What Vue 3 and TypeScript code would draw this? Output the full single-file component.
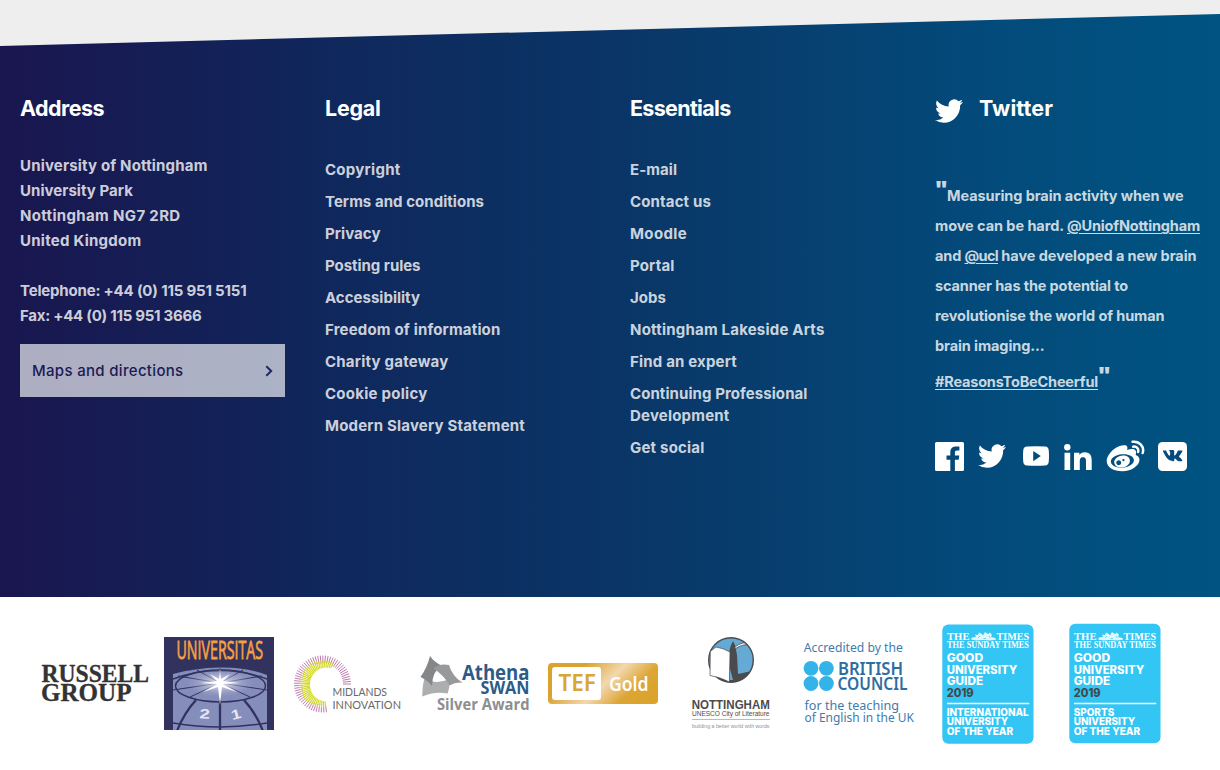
<script setup lang="ts">
interface Line {
  text: string
  width: number
}

/* Tracks a run of text out (or in) so that it spans the given width. */
const vFit = {
  mounted(el: HTMLElement, binding: { value: number }) {
    const count = (el.textContent || '').length
    const natural = el.getBoundingClientRect().width
    if (count > 0) el.style.letterSpacing = `${(binding.value - natural) / count}px`
  },
}

const address: Line[] = [
  { text: 'University of Nottingham', width: 187.5 },
  { text: 'University Park', width: 113 },
  { text: 'Nottingham NG7 2RD', width: 160.5 },
  { text: 'United Kingdom', width: 121.5 },
]
const phones: Line[] = [
  { text: 'Telephone: +44 (0) 115 951 5151', width: 226.5 },
  { text: 'Fax: +44 (0) 115 951 3666', width: 181.5 },
]

const linkColumns: { title: Line; items: Line[][] }[] = [
  {
    title: { text: 'Legal', width: 55.5 },
    items: [
      [{ text: 'Copyright', width: 75.5 }],
      [{ text: 'Terms and conditions', width: 159 }],
      [{ text: 'Privacy', width: 55.5 }],
      [{ text: 'Posting rules', width: 95.5 }],
      [{ text: 'Accessibility', width: 95 }],
      [{ text: 'Freedom of information', width: 175.5 }],
      [{ text: 'Charity gateway', width: 123.5 }],
      [{ text: 'Cookie policy', width: 102.5 }],
      [{ text: 'Modern Slavery Statement', width: 200 }],
    ],
  },
  {
    title: { text: 'Essentials', width: 100.5 },
    items: [
      [{ text: 'E-mail', width: 47 }],
      [{ text: 'Contact us', width: 81 }],
      [{ text: 'Moodle', width: 57 }],
      [{ text: 'Portal', width: 44.5 }],
      [{ text: 'Jobs', width: 36 }],
      [{ text: 'Nottingham Lakeside Arts', width: 194.5 }],
      [{ text: 'Find an expert', width: 107 }],
      [
        { text: 'Continuing Professional', width: 177.5 },
        { text: 'Development', width: 99.5 },
      ],
      [{ text: 'Get social', width: 74.5 }],
    ],
  },
]

const bird =
  'M23.953 4.57a10 10 0 01-2.825.775 4.958 4.958 0 002.163-2.723c-.951.555-2.005.959-3.127 1.184a4.92 4.92 0 00-8.384 4.482C7.69 8.095 4.067 6.13 1.64 3.162a4.822 4.822 0 00-.666 2.475c0 1.71.87 3.213 2.188 4.096a4.904 4.904 0 01-2.228-.616v.06a4.923 4.923 0 003.946 4.827 4.996 4.996 0 01-2.212.085 4.936 4.936 0 004.604 3.417 9.867 9.867 0 01-6.102 2.105c-.39 0-.779-.023-1.17-.067a13.995 13.995 0 007.557 2.209c9.053 0 13.998-7.496 13.998-13.985 0-.21 0-.42-.015-.63A9.935 9.935 0 0024 4.59z'

/* Rays of the sunburst run from due east, over the top, round to the bottom. */
const rays = Array.from({ length: 54 }, (_, i) => {
  const deg = (i / 53) * 278
  const a = (deg * Math.PI) / 180
  const at = (r: number) => `${(37.5 + r * Math.cos(a)).toFixed(2)} ${(67 - r * Math.sin(a)).toFixed(2)}`
  const west = Math.max(0, (1 - Math.cos(a + 0.12)) / 2)
  const mid = 22.5
  return {
    outer: `M${at(28.5)}L${at(mid - 2)}`,
    inner: `M${at(mid + 1)}L${at(mid - 2 - 8 * west)}`,
    yellow: deg > 60,
  }
})

const awards = [
  { first: 'INTERNATIONAL', width: 82 },
  { first: 'SPORTS', width: 40.5 },
]
</script>

<template>
  <div class="page">
    <footer class="footer">
      <section class="column">
        <h2><span v-fit="84" class="run">Address</span></h2>
        <address>
          <div v-for="l in address" :key="l.text"><span v-fit="l.width" class="run">{{ l.text }}</span></div>
          <div class="phones">
            <div v-for="l in phones" :key="l.text"><span v-fit="l.width" class="run">{{ l.text }}</span></div>
          </div>
        </address>
        <a class="maps">
          <span v-fit="151.5" class="run">Maps and directions</span>
          <svg width="8" height="12" viewBox="0 0 8 12"><path d="M1.3 1.2 6.2 6l-4.9 4.8" fill="none" stroke="#1c2763" stroke-width="2" /></svg>
        </a>
      </section>

      <section v-for="c in linkColumns" :key="c.title.text" class="column">
        <h2><span v-fit="c.title.width" class="run">{{ c.title.text }}</span></h2>
        <ul>
          <li v-for="item in c.items" :key="item[0].text">
            <div v-for="l in item" :key="l.text"><span v-fit="l.width" class="run">{{ l.text }}</span></div>
          </li>
        </ul>
      </section>

      <section class="column">
        <h2 class="with-icon">
          <svg width="28" height="24" viewBox="0 2 24 20" preserveAspectRatio="none"><path :d="bird" fill="#fff" /></svg>
          <span v-fit="74" class="run">Twitter</span>
        </h2>
        <div class="tweet">
          <div><span class="quote">"</span><span v-fit="236.5" class="run">Measuring brain activity when we</span></div>
          <div><span v-fit="132" class="run">{{ 'move can be hard. ' }}</span><a v-fit="133" class="run">@UniofNottingham</a></div>
          <div><span v-fit="29.5" class="run">{{ 'and ' }}</span><a v-fit="33.5" class="run">@ucl</a><span v-fit="198.5" class="run">{{ ' have developed a new brain' }}</span></div>
          <div><span v-fit="193" class="run">scanner has the potential to</span></div>
          <div><span v-fit="229.5" class="run">revolutionise the world of human</span></div>
          <div><span v-fit="109.5" class="run">brain imaging...</span></div>
          <div class="last"><a v-fit="163" class="run">#ReasonsToBeCheerful</a><span class="quote">"</span></div>
        </div>
        <div class="social">
          <svg class="facebook" width="29" height="29" viewBox="0 0 29 29">
            <path fill="#fff" d="M1.5 0h26A1.5 1.5 0 0 1 29 1.500v26a1.500 1.500 0 0 1-1.500 1.500h-7.600V17.800h3.800l.6-4.400h-4.400v-2.800c0-1.300.4-2.100 2.200-2.100h2.300V4.600c-.4 0-1.800-.2-3.400-.2-3.400 0-5.700 2.100-5.700 5.800v3.200h-3.800v4.400h3.800V29H1.500A1.500 1.500 0 0 1 0 27.500v-26A1.500 1.500 0 0 1 1.500 0z" />
          </svg>
          <svg class="twitter" width="28" height="24" viewBox="0 2 24 20" preserveAspectRatio="none"><path :d="bird" fill="#fff" /></svg>
          <svg class="youtube" width="26" height="20" viewBox="0 0 26 20">
            <path fill="#fff" fill-rule="evenodd" d="M4 .6Q13-.3 22 .6q3.400.3 3.700 3.500.6 5.900 0 11.800-.3 3.200-3.700 3.500-9 .9-18 0-3.400-.3-3.700-3.500-.6-5.900 0-11.800Q.6.900 4 .6zM10.200 4.900v10.300l7.600-5.150z" />
          </svg>
          <svg class="linkedin" width="28" height="26" viewBox="0 0 28 26">
            <g fill="#fff"><circle cx="3.300" cy="3.200" r="3.200" /><path d="M.5 8.700h5.700V26H.5zM10 8.700h5.400V11c.8-1.500 2.700-2.800 5.400-2.800 5.700 0 6.900 3.600 6.900 8.500V26H22v-8.300c0-2 0-4.500-2.900-4.500s-3.300 2.100-3.300 4.400V26H10z" /></g>
          </svg>
          <svg class="weibo" width="39" height="32" viewBox="0 0 39 32">
            <path fill="#fff" fill-rule="evenodd" d="M18.500 5.200c2.700 0 3.500 2 2.600 4.900 3.500-1.500 7-1.600 8.400.3.900 1.200.7 2.900.1 4.600 2.400.8 3.900 2.400 3.900 4.700 0 5.500-7.600 11.600-17.200 11.600C7.500 31.300.7 27.400.7 21c0-4 3-8.300 7.100-11.700C11.500 6.300 15.500 5 18.500 5.200zM15.700 14.300c-6.400.5-11.200 4-10.800 7.700.4 3.800 5.800 6.200 12.200 5.700 6.400-.6 11.200-4.200 10.800-7.900-.4-3.700-5.800-6.100-12.200-5.500z" />
            <path fill="#fff" fill-rule="evenodd" d="M15.400 15.700c4.400-.8 8.300 1.200 8.500 4.700.2 3.300-3.100 6.600-7.400 7.100-4.300.5-8-1.500-8.300-4.900-.2-3.300 3-6.200 7.200-6.900zM13 20.200a2.500 2.500 0 1 0 .4 4.900 2.500 2.500 0 0 0-.4-4.900zm4.400-1.200a1.100 1.100 0 1 0 .1 2.200 1.100 1.100 0 0 0-.1-2.200z" />
            <path fill="none" stroke="#fff" stroke-width="2.500" stroke-linecap="round" d="M26.600 1.800C33.200.8 38.700 6.600 36.700 13M27.200 6.700c3.300-.6 5.800 2.100 4.900 5.200" />
          </svg>
          <svg class="vk" width="29" height="29" viewBox="0 0 29 29">
            <rect width="29" height="29" rx="4.500" fill="#fff" />
            <path transform="translate(1.600 1.300) scale(.89)" fill="#034b7d" d="M14.300 20.200h1.300s.4 0 .6-.3c.2-.2.200-.6.200-.6s0-1.800.8-2.100c.8-.3 1.900 1.800 3 2.500.8.6 1.500.5 1.500.5l2.900 0s1.500-.1.800-1.300c-.1-.1-.4-.9-2.200-2.600-1.900-1.700-1.600-1.400.6-4.400 1.400-1.800 1.900-2.900 1.800-3.400-.2-.4-1.200-.3-1.200-.3h-3.300s-.3 0-.5.100-.3.400-.3.400-.5 1.400-1.200 2.600c-1.500 2.500-2.100 2.600-2.300 2.500-.6-.4-.4-1.500-.4-2.300 0-2.500.4-3.500-.7-3.800-.4-.1-.7-.1-1.700-.1-1.300 0-2.400 0-3 .3-.4.200-.7.600-.5.700.2 0 .8.100 1 .5.400.5.400 1.500.4 1.500s.2 3-.5 3.300c-.5.300-1.200-.3-2.600-2.700-.7-1.200-1.300-2.600-1.300-2.600s-.1-.3-.3-.4l-.6-.2H4.400s-.5 0-.6.200c-.2.200 0 .6 0 .6s2.500 5.600 5.200 8.500c2.500 2.600 5.300 2.400 5.300 2.400z" />
          </svg>
        </div>
      </section>
    </footer>

    <div class="logos">
      <svg viewBox="31 617 127 140">
        <g class="serif" font-weight="700" font-size="24.500" fill="#333" stroke="#333" stroke-width=".3">
          <text x="41.500" y="681.700" textLength="107.500" lengthAdjust="spacingAndGlyphs">RUSSELL</text>
          <text x="41" y="701.300" textLength="90.500" lengthAdjust="spacingAndGlyphs">GROUP</text>
        </g>
      </svg>

      <svg viewBox="158 617 127 140">
        <defs>
          <clipPath id="globe"><path d="M173 674Q195 668 220 667.500T267 675V730H173z" /></clipPath>
          <radialGradient id="flare"><stop offset="0" stop-color="#fff" /><stop offset=".3" stop-color="#e9ebf6" stop-opacity=".75" /><stop offset="1" stop-color="#aab0d4" stop-opacity="0" /></radialGradient>
        </defs>
        <rect x="164" y="637" width="110" height="93" fill="#32325f" />
        <g clip-path="url(#globe)">
          <rect x="173" y="660" width="94" height="70" fill="#858dba" />
          <g fill="none" stroke="#32325f" stroke-width="1.500">
            <ellipse cx="220.500" cy="686" rx="45" ry="16" />
            <path d="M173 679Q220 662 267 679M168 722Q220 732 272 722" />
            <path d="M220 668V702M197 670 220 683 243 670M178 676 220 683 262 676M173 690 220 683 267 690M190 697 220 683 250 697" stroke-width="1" />
            <path d="M196 700Q184 713 177 731M244 700Q256 713 263 731M220 700V730" stroke-width="2.300" />
          </g>
          <ellipse cx="220" cy="683" rx="34" ry="14" fill="url(#flare)" opacity=".8" />
          <path fill="#fff" d="M220 668l1 11 9-5-7 7 16 2-16 1 14 8-15-5-2 18-2-18-15 5 14-8-16-1 16-2-7-7 9 5z" />
        </g>
        <text class="open" x="176.500" y="658.700" font-size="25.500" fill="#f5a142" stroke="#f5a142" stroke-width=".8" textLength="86.500" lengthAdjust="spacingAndGlyphs">UNIVERSITAS</text>
        <g class="sans" font-size="13.500" font-weight="700" fill="#e6e7f3">
          <text x="199.500" y="718.500" textLength="10.500" lengthAdjust="spacingAndGlyphs" transform="rotate(3 204 713)">2</text>
          <text x="231" y="719" textLength="10" lengthAdjust="spacingAndGlyphs" transform="rotate(-14 236 714)">1</text>
        </g>
      </svg>

      <svg viewBox="285 617 127 140">
        <g transform="translate(285 617)">
          <template v-for="(r, i) in rays" :key="i">
            <path :d="r.outer" stroke="#b0579e" stroke-width=".8" />
            <path v-if="r.yellow" :d="r.inner" stroke="#d3d82d" stroke-width="1.150" />
          </template>
        </g>
        <g class="lato" font-size="10.700" fill="#686868">
          <text x="332.500" y="696" textLength="54.500" lengthAdjust="spacingAndGlyphs">MIDLANDS</text>
          <text x="332.500" y="708.800" textLength="68.500" lengthAdjust="spacingAndGlyphs">INNOVATION</text>
        </g>
      </svg>

      <svg viewBox="412 617 127 140">
        <path fill="#acaeb0" d="M424.300 679Q436 685 449.500 679 450 687 447.700 693.500 434 691 422.300 696.500 422.300 686 424.300 679z" />
        <path fill="#848688" d="M430 656Q434 662 441.500 665.500 432 672 432 686 427 680 420.500 677 427 668 430 656z" />
        <path fill="#98999b" d="M433.300 668.500Q440 663 449 665 452 676 462.500 682.700 455 682 449.500 685.500 444 675 433.300 668.500z" />
        <path fill="#fff" d="M438 673.200 434 681.200Q438 682 442.500 680.500z" />
        <g class="open" font-weight="700">
          <text x="462" y="679.500" font-size="20.500" fill="#2d5b88" textLength="67.500" lengthAdjust="spacingAndGlyphs">Athena</text>
          <text x="480.500" y="694" font-size="17" fill="#2d5b88" textLength="49" lengthAdjust="spacingAndGlyphs">SWAN</text>
          <text x="437" y="710" font-size="15.700" fill="#8c8e90" textLength="92.500" lengthAdjust="spacingAndGlyphs">Silver Award</text>
        </g>
      </svg>

      <svg viewBox="539 617 127 140">
        <defs>
          <linearGradient id="gold" x1="0" y1=".3" x2="1" y2=".7"><stop offset="0" stop-color="#dba32b" /><stop offset=".2" stop-color="#d9a232" /><stop offset=".52" stop-color="#f3d8ae" /><stop offset=".78" stop-color="#dda535" /><stop offset="1" stop-color="#dba32b" /></linearGradient>
        </defs>
        <rect x="548" y="663" width="110" height="41" rx="4" fill="url(#gold)" />
        <rect x="552" y="667" width="49" height="33" rx="3" fill="#fff" />
        <g class="noto">
          <text x="558.500" y="691" font-size="23.500" font-weight="600" fill="#d9a633" textLength="37.500" lengthAdjust="spacingAndGlyphs">TEF</text>
          <text x="609" y="690.500" font-size="19.500" font-weight="600" fill="#fff" textLength="39.500" lengthAdjust="spacingAndGlyphs">Gold</text>
        </g>
      </svg>

      <svg viewBox="666 617 127 140">
        <defs>
          <clipPath id="badge"><circle cx="731" cy="660" r="22.500" /></clipPath>
        </defs>
        <circle cx="731" cy="660" r="22.300" fill="#65a9d5" />
        <g clip-path="url(#badge)">
          <path fill="#4b4b4d" d="M705 674 729.500 680V650L731 645 733 641 735 645 737 655 738 674 756 670V684H705z" />
          <path fill="#65a9d5" d="M729.800 668 733 680H729.800z" />
          <path fill="#fff" stroke="#4b4b4d" stroke-width=".8" d="M735 649Q743 643 754 645L751 642Q741 642 735 647z" />
        </g>
        <circle cx="731" cy="660" r="22.300" fill="none" stroke="#4b4b4d" stroke-width="1.400" />
        <path fill="#fff" stroke="#4b4b4d" stroke-width=".7" d="M710.300 651.500 716 647Q723 648 730 652L729.400 682Q720 677 710 675.500z" />
        <g class="sans" fill="#4b4b4d">
          <text x="691.800" y="708.500" font-size="13" font-weight="700" textLength="78" lengthAdjust="spacingAndGlyphs">NOTTINGHAM</text>
          <text x="692" y="715.500" font-size="7.600" textLength="77.500" lengthAdjust="spacingAndGlyphs">UNESCO City of Literature</text>
          <path d="M692 719.500H770" stroke="#aaa" stroke-width=".8" />
          <text x="692" y="727.500" font-size="6" fill="#929294" textLength="77.500" lengthAdjust="spacingAndGlyphs">building a better world with words</text>
        </g>
      </svg>

      <svg viewBox="793 617 127 140">
        <g fill="#34b3e9"><circle cx="811" cy="668.300" r="7.400" /><circle cx="826.400" cy="668.300" r="7.400" /><circle cx="811" cy="683.500" r="7.400" /><circle cx="826.400" cy="683.500" r="7.400" /></g>
        <g class="noto" fill="#3f7bab" font-size="13.300">
          <text x="803.800" y="651.700" textLength="99" lengthAdjust="spacingAndGlyphs">Accredited by the</text>
          <text x="804.500" y="710" textLength="94.500" lengthAdjust="spacingAndGlyphs">for the teaching</text>
          <text x="804.500" y="722" textLength="109.500" lengthAdjust="spacingAndGlyphs">of English in the UK</text>
        </g>
        <g class="noto" fill="#2d6d9f" font-size="17.500" font-weight="600">
          <text x="838" y="675" textLength="65" lengthAdjust="spacingAndGlyphs">BRITISH</text>
          <text x="837.500" y="689.800" textLength="70" lengthAdjust="spacingAndGlyphs">COUNCIL</text>
        </g>
      </svg>

      <svg v-for="(a, i) in awards" :key="a.first" viewBox="920 617 127 140">
        <rect x="942.300" :y="624.4 - i * 0.600" width="91.200" height="119.400" rx="6" fill="#33c5f3" />
        <g class="serif" fill="#fff" font-weight="700">
          <text x="947" y="640.200" font-size="10.300" textLength="22.500" lengthAdjust="spacingAndGlyphs">THE</text>
          <text x="996.500" y="640.200" font-size="10.300" textLength="32.500" lengthAdjust="spacingAndGlyphs">TIMES</text>
          <text x="947" y="647.900" font-size="9.300" textLength="82" lengthAdjust="spacingAndGlyphs">THE SUNDAY TIMES</text>
        </g>
        <path fill="#e2f6fd" d="M971 639.500 972 637.500 976 637 975 634.500 978 635 979 632.500 982 634 983 635.500 985 632 988 634 990 632.500 992 635 991 637 995.500 638 996 639.800 990 640.500 983 640 976 640.500z" />
        <path fill="none" stroke="#33c5f3" stroke-width=".7" d="M978 638 980 636M983.500 638.500h2.500M989 636 990.500 638" />
        <g class="inter" fill="#fff" font-weight="800" font-size="11.200">
          <text x="946.700" y="662" textLength="36.500" lengthAdjust="spacingAndGlyphs">GOOD</text>
          <text x="946.700" y="673.700" textLength="70.500" lengthAdjust="spacingAndGlyphs">UNIVERSITY</text>
          <text x="946.700" y="685.300" textLength="36.500" lengthAdjust="spacingAndGlyphs">GUIDE</text>
          <text x="946.700" y="697.300" textLength="27" lengthAdjust="spacingAndGlyphs" fill="#46494c">2019</text>
          <path d="M947 703.500H1029.200" stroke="#fff" stroke-width="1.300" />
          <g font-size="10.300">
            <text x="946.700" y="715.700" :textLength="a.width" lengthAdjust="spacingAndGlyphs">{{ a.first }}</text>
            <text x="946.700" y="725.400" textLength="61.500" lengthAdjust="spacingAndGlyphs">UNIVERSITY</text>
            <text x="946.700" y="735" textLength="66.500" lengthAdjust="spacingAndGlyphs">OF THE YEAR</text>
          </g>
        </g>
      </svg>
    </div>
  </div>
</template>

<style>
body {
  margin: 0;
  background: #fff;
}
</style>

<style scoped>
.page {
  width: 1220px;
  height: 770px;
  overflow: hidden;
  background: linear-gradient(#eee 0 100px, #fff 100px);
  font-family: Inter, "Liberation Sans", sans-serif;
}
.footer {
  box-sizing: border-box;
  height: 597px;
  padding: 93px 20px 0;
  display: grid;
  grid-template-columns: repeat(4, 265px);
  column-gap: 40px;
  background: linear-gradient(90deg, #1a164f, #10265b 25%, #0a3566 50%, #034a7a 80%, #005482);
  clip-path: polygon(0 46px, 100% 14px, 100% 100%, 0 100%);
  color: rgba(255, 255, 255, 0.8);
  font-size: 15px;
  font-weight: 700;
}
.run {
  display: inline-block;
  white-space: pre;
}
h2 {
  margin: 0;
  height: 30px;
  font-size: 21.500px;
  line-height: 30px;
  font-weight: 700;
  color: #fff;
}
.with-icon {
  display: flex;
  align-items: center;
  gap: 16px;
}
.with-icon svg {
  margin-top: 5px;
}
address {
  margin-top: 30px;
  font-style: normal;
  line-height: 25px;
}
.phones {
  margin-top: 25px;
}
.maps {
  box-sizing: border-box;
  height: 53px;
  margin-top: 16px;
  padding: 0 12px;
  display: flex;
  align-items: center;
  justify-content: space-between;
  background: rgba(255, 255, 255, 0.65);
  color: #1b1b55;
  font-weight: 500;
}
ul {
  margin: 36px 0 0;
  padding: 0;
  list-style: none;
}
li {
  margin-bottom: 10px;
  line-height: 22px;
}
.tweet {
  margin-top: 58px;
  font-size: 14.500px;
  line-height: 30px;
}
.tweet > div {
  display: flex;
  height: 30px;
}
.tweet a {
  text-decoration: underline;
  text-underline-offset: 2px;
  text-decoration-thickness: 1px;
}
.tweet > .last {
  margin-top: 6px;
}
.quote {
  width: 12px;
  margin-top: -6px;
  font-family: "Open Sans", sans-serif;
  font-size: 24px;
  font-weight: 800;
  line-height: 30px;
}
.social {
  display: flex;
  align-items: center;
  height: 32px;
  margin-top: 43px;
}
.social .twitter {
  margin-left: 14px;
}
.social .youtube {
  margin-left: 17px;
}
.social .linkedin {
  margin-left: 15px;
  margin-top: 2px;
}
.social .weibo {
  margin-left: 14px;
}
.social .vk {
  margin-left: 13px;
}
.logos {
  height: 173px;
  box-sizing: border-box;
  padding: 20px 0 0 31px;
  display: flex;
  background: #fff;
}
.logos svg {
  width: 127px;
  height: 140px;
  flex: none;
}
.serif {
  font-family: "Liberation Serif", serif;
}
.sans {
  font-family: "Liberation Sans", sans-serif;
}
.open {
  font-family: "Open Sans", sans-serif;
}
.noto {
  font-family: "Noto Sans", sans-serif;
}
.lato {
  font-family: Lato, sans-serif;
}
.inter {
  font-family: Inter, sans-serif;
}
</style>
